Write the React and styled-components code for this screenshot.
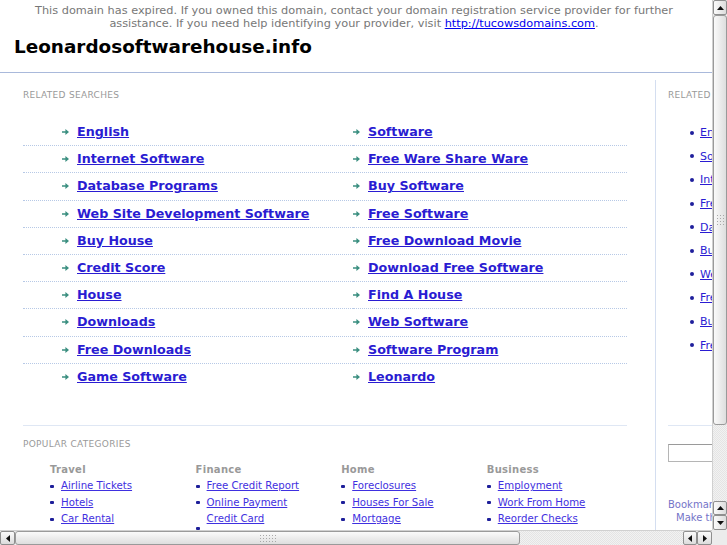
import React from 'react';
import styled, { createGlobalStyle } from 'styled-components';

const GlobalStyle = createGlobalStyle`
  html, body {
    margin: 0;
    padding: 0;
    overflow: hidden;
    background: #ffffff;
    font-family: "DejaVu Sans", Verdana, sans-serif;
  }
`;

const relatedLeft = [
  'English', 'Internet Software', 'Database Programs', 'Web Site Development Software', 'Buy House',
  'Credit Score', 'House', 'Downloads', 'Free Downloads', 'Game Software',
];
const relatedRight = [
  'Software', 'Free Ware Share Ware', 'Buy Software', 'Free Software', 'Free Download Movie',
  'Download Free Software', 'Find A House', 'Web Software', 'Software Program', 'Leonardo',
];
const sideLinks = [
  'English', 'Software', 'Internet Software', 'Free Ware Share Ware', 'Database Programs',
  'Buy Software', 'Web Site Development Software', 'Free Software', 'Buy House', 'Free Download Movie',
];
const categories = [
  { title: 'Travel', items: [{ t: 'Airline Tickets' }, { t: 'Hotels' }, { t: 'Car Rental' }, { t: 'Flights' }] },
  { title: 'Finance', items: [{ t: 'Free Credit Report' }, { t: 'Online Payment' }, { t: 'Credit Card', nobullet: true }, { t: 'Loans', lift: true }] },
  { title: 'Home', items: [{ t: 'Foreclosures' }, { t: 'Houses For Sale' }, { t: 'Mortgage' }, { t: 'Home Improvement' }] },
  { title: 'Business', items: [{ t: 'Employment' }, { t: 'Work From Home' }, { t: 'Reorder Checks' }, { t: 'Small Business' }] },
];

const Viewport = styled.div`
  width: 727px;
  height: 545px;
  display: grid;
  grid-template-columns: 712px 15px;
  grid-template-rows: 530px 15px;
  overflow: hidden;
`;

const Content = styled.div`
  overflow: hidden;
  width: 712px;
  height: 530px;
`;

const Notice = styled.div`
  padding: 4px 20px 0 16px;
  text-align: center;
  color: #777777;
  font-size: 11.3px;
  line-height: 13px;
  a { color: #0000ee; }
`;

const Title = styled.h1`
  margin: 0;
  padding: 6px 0 0 14px;
  height: 35px;
  box-sizing: border-box;
  font-size: 18.4px;
  line-height: 22px;
  font-weight: bold;
  color: #000000;
`;

const TopRule = styled.div`
  height: 0;
  border-top: 1px solid #a9b9db;
  margin-top: 7px;
`;

const Main = styled.div`
  display: flex;
  margin-top: 7px;
`;

const LeftPanel = styled.div`
  width: 655px;
  flex-shrink: 0;
  padding: 0 28px 0 23px;
  box-sizing: border-box;
`;

const SideRule = styled.div`
  width: 1px;
  flex-shrink: 0;
  background: #d4def0;
  height: 450px;
`;

const RightPanel = styled.div`
  width: 190px;
  flex-shrink: 0;
  padding-left: 12px;
`;

const SectionLabel = styled.div`
  font-size: 9px;
  line-height: 11px;
  letter-spacing: 0.3px;
  color: #999999;
  text-transform: uppercase;
  padding-top: ${({ $top }) => $top}px;
`;

const LinkTable = styled.div`
  display: grid;
  grid-template-columns: 330px 1fr;
  margin-top: 18px;
`;

const LinkCell = styled.div`
  height: 27.2px;
  box-sizing: border-box;
  display: flex;
  align-items: center;
  gap: 8px;
  padding-left: ${({ $pad }) => $pad}px;
  border-bottom: ${({ $last }) => ($last ? 'none' : '1px dotted #b7c9e6')};
`;

const BigLink = styled.a`
  color: #2a1cd2;
  font-size: 12.7px;
  font-weight: bold;
  text-decoration: underline;
  line-height: 16px;
  white-space: nowrap;
  cursor: pointer;
`;

const Arrow = () => (
  <svg width="7" height="6" viewBox="0 0 7 6">
    <path d="M0 2.2h3.4V0L7 3 3.4 6V3.8H0z" fill="#3b8f80" />
  </svg>
);

const BottomRule = styled.div`
  border-top: 1px solid #dfe7f4;
  margin-top: 34px;
`;

const CatGrid = styled.div`
  display: grid;
  grid-template-columns: repeat(4, 145.6px);
  padding-left: 27px;
  margin-top: 14px;
`;

const CatTitle = styled.div`
  font-size: 10px;
  line-height: 12px;
  font-weight: bold;
  color: #999999;
  letter-spacing: 0.3px;
  margin-bottom: 2px;
`;

const CatItem = styled.div`
  position: relative;
  height: 16.5px;
  display: flex;
  align-items: center;
  padding-left: 11px;
  &::before {
    content: '';
    display: ${({ $nobullet }) => ($nobullet ? 'none' : 'block')};
    position: absolute;
    left: 0;
    top: ${({ $lift }) => ($lift ? 0 : 7)}px;
    width: 4px;
    height: 3px;
    border-radius: 1px;
    background: #1e1f9a;
  }
`;

const SmallLink = styled.a`
  color: #3f30e0;
  font-size: 10.2px;
  line-height: 12px;
  text-decoration: underline;
  white-space: nowrap;
  cursor: pointer;
`;

const SideList = styled.div`
  margin-top: 20px;
  padding-left: 22px;
`;

const SideItem = styled.div`
  height: 23.6px;
  display: flex;
  align-items: center;
  gap: 6px;
  &::before {
    content: '';
    width: 4px;
    height: 4px;
    border-radius: 50%;
    background: #1f1f9c;
    flex-shrink: 0;
  }
`;

const SideLink = styled.a`
  color: #2a1cd2;
  font-size: 11px;
  text-decoration: underline;
  white-space: nowrap;
  cursor: pointer;
`;

const SideRuleH = styled.div`
  border-top: 1px solid #dfe7f4;
  margin-top: 68px;
`;

const SearchBox = styled.input`
  display: block;
  margin-top: 18px;
  width: 150px;
  height: 18px;
  box-sizing: border-box;
  border: 1px solid #b5b5b5;
  border-top-color: #9a9a9a;
  background: #fff;
  padding: 0;
`;

const BookmarkList = styled.div`
  margin-top: 36px;
`;

const BookmarkLine = styled.div`
  color: #7474c8;
  font-size: 10px;
  line-height: 13px;
  white-space: nowrap;
  padding-left: ${({ $indent }) => $indent}px;
`;

/* scrollbars */
const VBar = styled.div`
  display: flex;
  flex-direction: column;
  background: repeating-conic-gradient(#e4e4e4 0% 25%, #f2f2f2 0% 50%) 0 0 / 2px 2px;
  border-left: 1px solid #d0d0d0;
  box-sizing: border-box;
`;

const HBar = styled.div`
  display: flex;
  background: repeating-conic-gradient(#e4e4e4 0% 25%, #f2f2f2 0% 50%) 0 0 / 2px 2px;
  border-top: 1px solid #d0d0d0;
  box-sizing: border-box;
`;

const Corner = styled.div`
  background: #ececec;
`;

const ScrollButton = styled.div`
  width: ${({ $w }) => $w}px;
  height: ${({ $h }) => $h}px;
  flex-shrink: 0;
  box-sizing: border-box;
  border: 1px solid #8f8f8f;
  border-radius: 2px;
  background: linear-gradient(${({ $dir }) => ($dir === 'v' ? '90deg' : '180deg')}, #fbfbfb, #dcdcdc);
  display: flex;
  align-items: center;
  justify-content: center;
  svg { display: block; }
`;

const Thumb = styled.div`
  flex-shrink: 0;
  width: ${({ $w }) => $w};
  height: ${({ $h }) => $h};
  box-sizing: border-box;
  border: 1px solid #9a9a9a;
  border-radius: 3px;
  background: linear-gradient(${({ $dir }) => ($dir === 'v' ? '90deg' : '180deg')}, #fafafa, #dedede);
  display: flex;
  align-items: center;
  justify-content: center;
`;

const Grip = styled.div`
  width: ${({ $w }) => $w}px;
  height: ${({ $h }) => $h}px;
  background: radial-gradient(circle, #a8a8a8 0.7px, transparent 0.8px) 0 0 / 3px 3px;
`;

const Spacer = styled.div`
  flex: 1;
`;

const Tri = ({ dir }) => {
  const paths = {
    up: 'M0 4L3.5 0L7 4z',
    down: 'M0 0L7 0L3.5 4z',
    left: 'M4 0L4 7L0 3.5z',
    right: 'M0 0L4 3.5L0 7z',
  };
  const vert = dir === 'up' || dir === 'down';
  return (
    <svg width={vert ? 7 : 4} height={vert ? 4 : 7} viewBox={vert ? '0 0 7 4' : '0 0 4 7'}>
      <path d={paths[dir]} fill="#111" />
    </svg>
  );
};

export default function App() {
  return (
    <>
      <GlobalStyle />
      <Viewport>
        <Content>
          <Notice>
            This domain has expired. If you owned this domain, contact your domain registration service provider for further
            assistance. If you need help identifying your provider, visit <a href="#">http://tucowsdomains.com</a>.
          </Notice>
          <Title>Leonardosoftwarehouse.info</Title>
          <TopRule />
          <Main>
            <LeftPanel>
              <SectionLabel $top={10}>Related Searches</SectionLabel>
              <LinkTable>
                {relatedLeft.map((l, i) => (
                  <React.Fragment key={l}>
                    <LinkCell $pad={39} $last={i === relatedLeft.length - 1}>
                      <Arrow />
                      <BigLink href="#">{l}</BigLink>
                    </LinkCell>
                    <LinkCell $pad={0} $last={i === relatedLeft.length - 1}>
                      <Arrow />
                      <BigLink href="#">{relatedRight[i]}</BigLink>
                    </LinkCell>
                  </React.Fragment>
                ))}
              </LinkTable>
              <BottomRule />
              <SectionLabel $top={13}>Popular Categories</SectionLabel>
              <CatGrid>
                {categories.map((c) => (
                  <div key={c.title}>
                    <CatTitle>{c.title}</CatTitle>
                    {c.items.map((it) => (
                      <CatItem key={it.t} $nobullet={it.nobullet} $lift={it.lift}>
                        <SmallLink href="#">{it.t}</SmallLink>
                      </CatItem>
                    ))}
                  </div>
                ))}
              </CatGrid>
            </LeftPanel>
            <SideRule />
            <RightPanel>
              <SectionLabel $top={10}>Related Searches</SectionLabel>
              <SideList>
                {sideLinks.map((l) => (
                  <SideItem key={l}>
                    <SideLink href="#">{l}</SideLink>
                  </SideItem>
                ))}
              </SideList>
              <SideRuleH />
              <SearchBox type="text" />
              <BookmarkList>
                <BookmarkLine $indent={0}>Bookmark this page</BookmarkLine>
                <BookmarkLine $indent={8}>Make this your Homepage</BookmarkLine>
              </BookmarkList>
            </RightPanel>
          </Main>
        </Content>
        <VBar>
          <ScrollButton $w={14} $h={15} $dir="v"><Tri dir="up" /></ScrollButton>
          <Thumb $w="14px" $h="410px" $dir="v"><Grip $w={9} $h={12} /></Thumb>
          <Spacer />
          <ScrollButton $w={14} $h={14} $dir="v"><Tri dir="up" /></ScrollButton>
          <ScrollButton $w={14} $h={15} $dir="v"><Tri dir="down" /></ScrollButton>
        </VBar>
        <HBar>
          <ScrollButton $w={15} $h={14} $dir="h"><Tri dir="left" /></ScrollButton>
          <Thumb $w="505px" $h="14px" $dir="h"><Grip $w={18} $h={9} /></Thumb>
          <Spacer />
          <ScrollButton $w={14} $h={14} $dir="h"><Tri dir="left" /></ScrollButton>
          <ScrollButton $w={15} $h={14} $dir="h"><Tri dir="right" /></ScrollButton>
        </HBar>
        <Corner />
      </Viewport>
    </>
  );
}
